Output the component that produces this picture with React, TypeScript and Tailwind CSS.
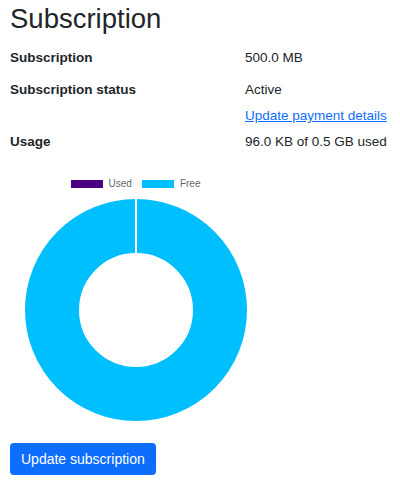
const rows = [
  { label: "Subscription", value: "500.0 MB" },
];

const UsageChart = () => {
  return (
    <div className="w-[251px] mt-[26px]">
      <div className="flex justify-center items-center h-[12px] text-[10px] leading-[12px] text-[#666666]">
        <span className="w-[32px] h-[8px] bg-[#4b0082]" />
        <span className="ml-[6px] mr-[10px]">Used</span>
        <span className="w-[32px] h-[8px] bg-[#00bfff]" />
        <span className="ml-[6px]">Free</span>
      </div>
      <div className="flex justify-center mt-[9px]">
        <svg width="222" height="222" viewBox="0 0 222 222">
          <circle cx="111" cy="111" r="84" fill="none" stroke="#00bfff" strokeWidth="54" />
          <line x1="111" y1="0" x2="111" y2="55" stroke="#ffffff" strokeWidth="2" />
        </svg>
      </div>
    </div>
  );
};

export default function App() {
  return (
    <div className="px-[10px] text-[#212529] font-['Liberation_Sans',Arial,sans-serif] text-[13.5px] leading-[20px] bg-white min-h-[487px]">
      <h1 className="text-[27.5px] leading-[32px] font-normal mt-[3px] mb-[13px]">Subscription</h1>

      {rows.map((row) => (
        <div key={row.label} className="flex mb-[12px]">
          <div className="w-[235px] font-bold">{row.label}</div>
          <div>{row.value}</div>
        </div>
      ))}

      <div className="flex mb-[6px]">
        <div className="w-[235px] font-bold">Subscription status</div>
        <div>
          <div>Active</div>
          <a href="#" className="block mt-[6px] text-[#0d6efd] underline">
            Update payment details
          </a>
        </div>
      </div>

      <div className="flex">
        <div className="w-[235px] font-bold">Usage</div>
        <div>96.0 KB of 0.5 GB used</div>
      </div>

      <UsageChart />

      <button className="mt-[22px] h-[32px] px-[11px] rounded-[4px] bg-[#0d6efd] text-white text-[14px]">
        Update subscription
      </button>
    </div>
  );
}
